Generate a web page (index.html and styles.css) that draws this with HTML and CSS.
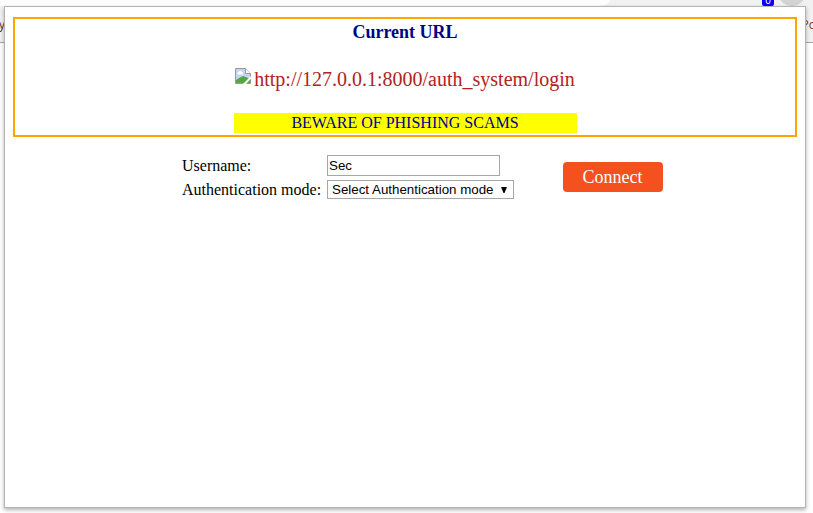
FILE: index.html
```html
<!DOCTYPE html>
<html lang="en">
<head>
<meta charset="utf-8">
<title>Login</title>
<link rel="stylesheet" href="styles.css">
</head>
<body>
<div class="browser" aria-hidden="true">
  <div class="address"></div>
  <div class="bookmarks"><span>y</span><span class="right">Po</span></div>
  <div class="count">0</div>
  <div class="avatar"></div>
</div>
<main class="popup">
  <section class="url-box">
    <h1>Current URL</h1>
    <div class="url">
      <svg width="16" height="16" viewBox="0 0 16 16">
        <path d="M.5.5h10l5 5v10H.5z" fill="#c3d5f5" stroke="#9a9a9a"/>
        <path d="M10.5.5v5h5" fill="#fff" stroke="#9a9a9a"/>
        <path d="M3 6.5a1.5 1.5 0 0 1 .7-2.7 2 2 0 0 1 3.5.4 1.2 1.2 0 0 1 .3 2.3z" fill="#fff"/>
        <path d="M1 15v-3l4-2.5L8 8l4 1.5 3 2V15z" fill="#53a93f"/>
        <path d="M8 16l8-8v2.5L11 16z" fill="#fff"/>
      </svg>
      <span>http://127.0.0.1:8000/auth_system/login</span>
    </div>
    <p class="warning">BEWARE OF PHISHING SCAMS</p>
  </section>
  <form class="login">
    <div class="fields">
      <label for="user">Username:</label>
      <input id="user" class="user" type="text" value="Sec">
      <label class="mode-label">Authentication mode:</label>
      <div class="select"><span>Select Authentication mode</span><svg width="6" height="6" viewBox="0 0 6 6"><path d="M0 0h6L3.5 6h-1z"/></svg></div>
    </div>
    <button class="connect" type="button">Connect</button>
  </form>
</main>
</body>
</html>
```
FILE: styles.css
```css
* { box-sizing: border-box; }
body {
  margin: 0;
  height: 513px;
  overflow: hidden;
  background: #fff;
  font-family: "Liberation Serif", serif;
  font-size: 16px;
  color: #000;
}
.browser {
  position: absolute;
  inset: 0 0 auto;
  height: 43px;
  overflow: hidden;
  background: #f1f1f1;
  border-bottom: 1px solid #a5a5a5;
}
.address {
  width: 610px;
  height: 6px;
  background: #fdfdfd;
  border-bottom-right-radius: 14px 7px;
}
.bookmarks {
  display: flex;
  justify-content: space-between;
  margin: 11px -3px 0 -1px;
  font: 12px/16px "Open Sans", sans-serif;
  color: #5b2840;
}
.bookmarks .right { color: #8a3528; }
.count {
  position: absolute;
  left: 762px;
  top: -6px;
  width: 12px;
  height: 12px;
  border-radius: 2px;
  background: #00f;
  color: #fff;
  font: 10px/13px "Liberation Sans", sans-serif;
  text-align: center;
}
.avatar {
  position: absolute;
  left: 778px;
  top: -22px;
  width: 28px;
  height: 28px;
  border-radius: 50%;
  background: #d3d3d3;
}
.popup {
  position: relative;
  width: 802px;
  height: 502px;
  margin: 6px 0 0 4px;
  padding: 10px 8px;
  background: #fff;
  border: 1px solid #b4b4b4;
  box-shadow: 0 2px 4px rgba(0, 0, 0, .3);
}
.url-box {
  width: 784px;
  height: 120px;
  border: 2px solid #ffa500;
  text-align: center;
}
h1 {
  margin: 3px 0 0;
  font-size: 18px;
  line-height: 21px;
  color: #00008b;
}
.url {
  display: flex;
  justify-content: center;
  gap: 3px;
  margin-top: 24px;
  height: 24px;
  font-size: 20px;
  line-height: 24px;
  color: #b22222;
}
.url svg { margin-top: 1px; }
.warning {
  width: 343px;
  height: 20px;
  margin: 22px auto 0;
  background: #ff0;
  color: #00008b;
  line-height: 20px;
}
.login {
  display: flex;
  align-items: flex-start;
  margin: 18px 0 0 169px;
}
.fields {
  display: grid;
  grid-template-columns: 145px 187px;
  grid-template-rows: 21px 19px;
  row-gap: 4px;
  line-height: 21px;
}
label { white-space: nowrap; }
.mode-label { line-height: 19px; }
.user {
  width: 173px;
  height: 21px;
  padding: 1px;
  border: 1px solid #a6a6a6;
  border-radius: 0;
  background: #fff;
  color: #000;
  font: 13.333px "Liberation Sans", sans-serif;
}
.select {
  display: flex;
  justify-content: space-between;
  align-items: center;
  height: 19px;
  padding: 0 6px 0 4px;
  border: 1px solid #a6a6a6;
  font: 13.333px/17px "Liberation Sans", sans-serif;
  white-space: nowrap;
}
.connect {
  width: 100px;
  height: 30px;
  margin: 7px 0 0 49px;
  padding: 0 1px 0 0;
  border: 0;
  border-radius: 4px;
  background: #f4511e;
  color: #fff;
  font: 18px "Liberation Serif", serif;
}
```
